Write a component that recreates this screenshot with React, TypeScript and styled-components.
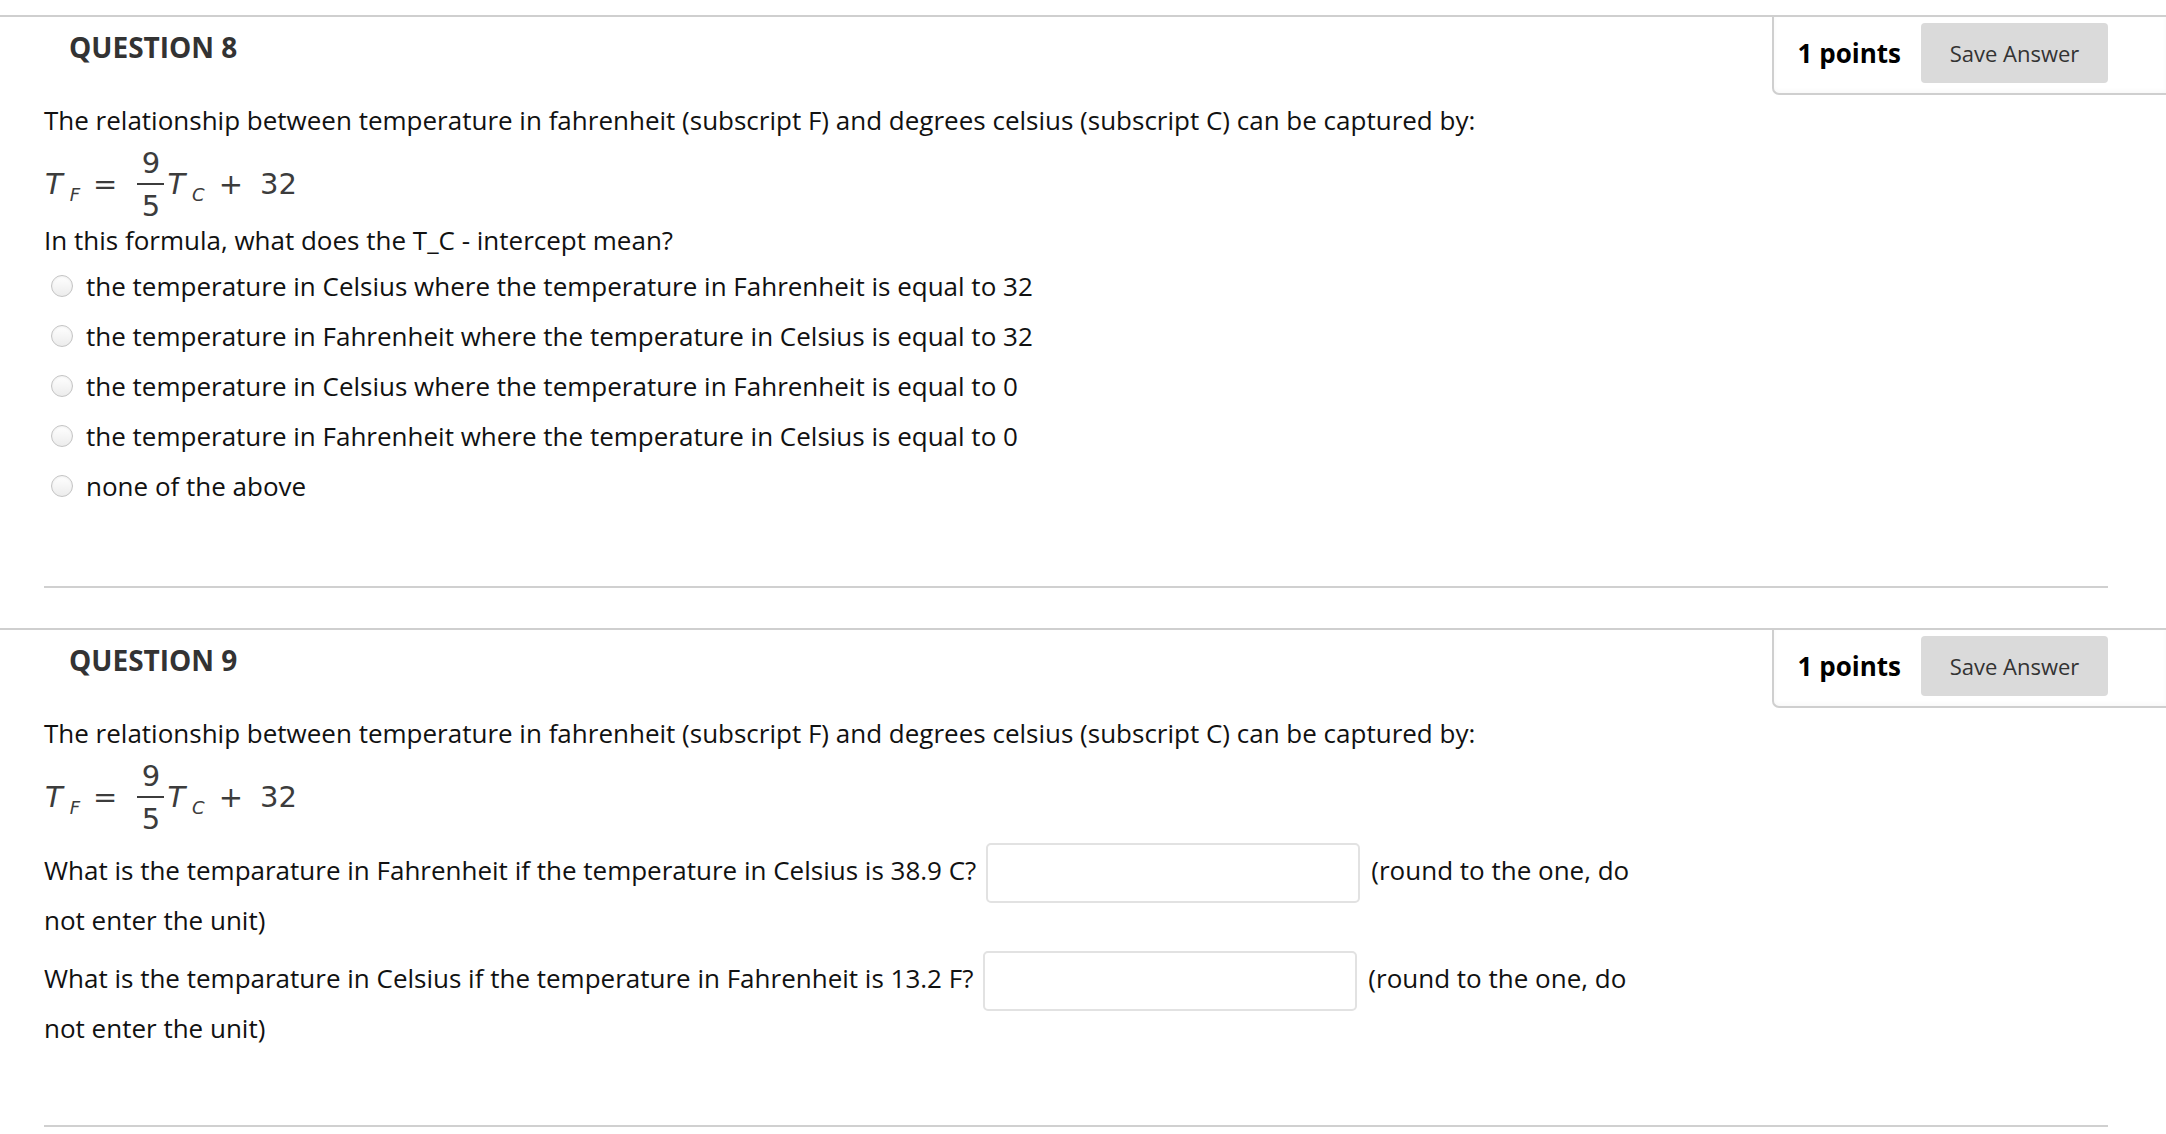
import React from "react";
import styled, { createGlobalStyle } from "styled-components";

const GlobalStyle = createGlobalStyle`
  html, body {
    margin: 0;
    padding: 0;
    background: #ffffff;
  }
  body {
    font-family: "Open Sans", "Liberation Sans", sans-serif;
    color: #111;
  }
`;

const Page = styled.div`
  padding-top: 15px;
  width: 100%;
  overflow: hidden;
`;

const Section = styled.section`
  border-top: 2px solid #cfcfcf;
  margin-bottom: 40px;
`;

const Header = styled.div`
  display: flex;
  justify-content: space-between;
  align-items: flex-start;
`;

const Title = styled.h2`
  margin: 10px 0 0 69px;
  font-size: 28px;
  line-height: 40px;
  font-weight: 700;
  color: #333;
`;

const PointsBox = styled.div`
  display: flex;
  align-items: flex-start;
  gap: 20px;
  height: 78px;
  padding: 6px 58px 0 24px;
  border-left: 2px solid #cfcfcf;
  border-bottom: 2px solid #cfcfcf;
  border-bottom-left-radius: 7px;
  box-shadow: inset 0 -2px 4px rgba(0, 0, 0, 0.03);
  box-sizing: border-box;
`;

const Points = styled.span`
  font-size: 26px;
  font-weight: 700;
  line-height: 60px;
  color: #000;
`;

const SaveButton = styled.button`
  width: 187px;
  height: 60px;
  border: none;
  border-radius: 4px;
  background: #dadada;
  color: #333;
  font-family: "Open Sans", sans-serif;
  font-size: 22px;
  cursor: pointer;
`;

const Body = styled.div`
  width: 1610px;
  padding: 5px 0 0 44px;
`;

const Text = styled.p`
  margin: 0;
  font-size: 26px;
  line-height: 40px;
`;

// math block, glyphs placed on a shared baseline
const Formula = styled.div`
  display: flex;
  align-items: flex-start;
  height: 80px;
  padding-left: 1px;
  font-family: "DejaVu Sans", sans-serif;
  font-size: 29px;
  line-height: 29px;
  color: #3c3c3c;
`;

const Var = styled.span<{ $left?: number }>`
  margin: 30px 0 0 ${(p) => p.$left ?? 0}px;
  font-style: italic;
  white-space: nowrap;
`;

const Sub = styled.sub`
  font-size: 18px;
  line-height: 1;
  font-style: italic;
  vertical-align: -7px;
  margin-left: 7px;
`;

const Op = styled.span<{ $left: number }>`
  margin: 30px 0 0 ${(p) => p.$left}px;
`;

const Fraction = styled.span`
  display: flex;
  flex-direction: column;
  align-items: center;
  width: 27px;
  margin: 11px 0 0 20px;
  line-height: 24px;
`;

const Bar = styled.span`
  display: block;
  width: 27px;
  height: 2px;
  background: #3c3c3c;
  margin: 8px 0 9px;
`;

const Options = styled.ul`
  list-style: none;
  margin: 1px 0 0;
  padding: 0;
`;

const Option = styled.li`
  display: flex;
  align-items: center;
  height: 50px;
  font-size: 26px;
`;

const Radio = styled.input`
  appearance: none;
  width: 22px;
  height: 22px;
  margin: 0 13px 0 7px;
  border-radius: 50%;
  border: 1px solid #c4c4c4;
  background: linear-gradient(#ffffff, #ececec);
  box-shadow: inset 0 1px 2px rgba(0, 0, 0, 0.06);
  flex-shrink: 0;
`;

const Rule = styled.hr<{ $top: number }>`
  border: none;
  border-top: 2px solid #d0d0d0;
  margin: ${(p) => p.$top}px 58px 0 44px;
`;

const Fill = styled.p<{ $top: number }>`
  margin: ${(p) => p.$top}px 0 0;
  font-size: 26px;
  line-height: 50px;
`;

const Blank = styled.input`
  width: 374px;
  height: 60px;
  box-sizing: border-box;
  margin: -8px 11px -8px 10px;
  vertical-align: middle;
  border: 2px solid #e2e2e2;
  border-radius: 5px;
  background: #fff;
`;

const options = [
  "the temperature in Celsius where the temperature in Fahrenheit is equal to 32",
  "the temperature in Fahrenheit where the temperature in Celsius is equal to 32",
  "the temperature in Celsius where the temperature in Fahrenheit is equal to 0",
  "the temperature in Fahrenheit where the temperature in Celsius is equal to 0",
  "none of the above",
];

const blanks = [
  "What is the temparature in Fahrenheit if the temperature in Celsius is 38.9 C?",
  "What is the temparature in Celsius if the temperature in Fahrenheit is 13.2 F?",
];

const intro =
  "The relationship between temperature in fahrenheit (subscript F) and degrees celsius (subscript C) can be captured by:";

function QuestionHeader({ n }: { n: number }) {
  return (
    <Header>
      <Title>QUESTION {n}</Title>
      <PointsBox>
        <Points>1 points</Points>
        <SaveButton>Save Answer</SaveButton>
      </PointsBox>
    </Header>
  );
}

function TempFormula() {
  return (
    <Formula>
      <Var>
        T<Sub>F</Sub>
      </Var>
      <Op $left={13}>=</Op>
      <Fraction>
        <span>9</span>
        <Bar />
        <span>5</span>
      </Fraction>
      <Var $left={3}>
        T<Sub>C</Sub>
      </Var>
      <Op $left={14}>+</Op>
      <Op $left={17}>32</Op>
    </Formula>
  );
}

export default function App() {
  return (
    <Page>
      <GlobalStyle />
      <Section>
        <QuestionHeader n={8} />
        <Body>
          <Text>{intro}</Text>
          <TempFormula />
          <Text>In this formula, what does the T_C - intercept mean?</Text>
          <Options>
            {options.map((o) => (
              <Option key={o}>
                <Radio type="radio" name="q8" />
                {o}
              </Option>
            ))}
          </Options>
        </Body>
        <Rule $top={75} />
      </Section>
      <Section>
        <QuestionHeader n={9} />
        <Body>
          <Text>{intro}</Text>
          <TempFormula />
          {blanks.map((q, i) => (
            <Fill key={q} $top={i === 0 ? 12 : 8}>
              {q}
              <Blank type="text" />
              (round to the one, do
              <br />
              not enter the unit)
            </Fill>
          ))}
        </Body>
        <Rule $top={72} />
      </Section>
    </Page>
  );
}
